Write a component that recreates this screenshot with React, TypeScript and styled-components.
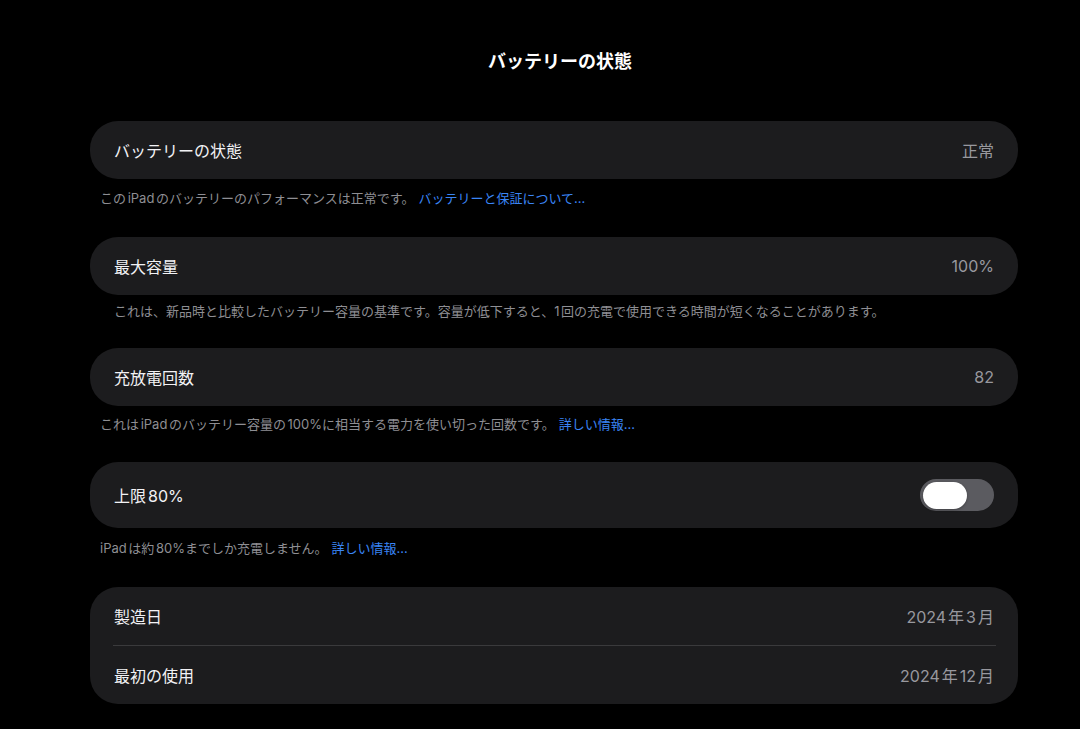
import React from 'react';
import styled, { createGlobalStyle } from 'styled-components';

const GlobalStyle = createGlobalStyle`
  html, body {
    margin: 0;
    padding: 0;
    background: #000;
  }
  body {
    font-family: "Inter", "Noto Sans CJK JP", sans-serif;
    color: #f2f2f7;
    -webkit-font-smoothing: antialiased;
    text-autospace: normal;
  }
`;

const Page = styled.div`
  width: 928px;
  min-height: 729px;
  margin-left: 90px;
  box-sizing: border-box;
  padding-top: 50px;
`;

const Title = styled.h1`
  margin: 0 0 47px;
  padding-left: 12px;
  text-align: center;
  font-size: 18px;
  line-height: 24px;
  font-weight: 700;
  color: #fff;
`;

const Section = styled.section<{ $gap?: number }>`
  margin-bottom: ${p => p.$gap ?? 28}px;
`;

const Card = styled.div`
  background: #1c1c1e;
  border-radius: 28px;
  overflow: hidden;
`;

const Row = styled.div<{ $tall?: boolean }>`
  display: flex;
  align-items: center;
  justify-content: space-between;
  height: ${p => (p.$tall ? '66px' : '58px')};
  padding: 0 24px;
  position: relative;
  font-size: 16px;

  & + & {
    height: 59px;
  }
  & + &::before {
    content: '';
    position: absolute;
    top: 0;
    left: 23px;
    right: 22px;
    height: 1px;
    background: #3a3a3c;
  }
`;

const Label = styled.span`
  color: #f2f2f5;
  font-weight: 400;
`;

const Value = styled.span`
  color: #98989e;
`;

const Footnote = styled.p<{ $indent?: boolean; $top?: number }>`
  margin: ${p => p.$top ?? 10}px 0 0;
  padding-left: ${p => (p.$indent ? '24px' : '10px')};
  font-size: 13px;
  line-height: 18px;
  color: #8e8e93;
`;

const LinkText = styled.a`
  color: #3a85f5;
  text-decoration: none;
  margin-left: 4px;
`;

const Toggle = styled.div<{ $on?: boolean }>`
  width: 74px;
  height: 32px;
  border-radius: 16px;
  background: ${p => (p.$on ? '#34c759' : '#5b5b60')};
  display: flex;
  align-items: center;
  padding: 0 3px;
  box-sizing: border-box;
  justify-content: ${p => (p.$on ? 'flex-end' : 'flex-start')};
`;

const Knob = styled.div`
  width: 44px;
  height: 27px;
  border-radius: 14px;
  background: #fff;
  box-shadow: 0 1px 3px rgba(0, 0, 0, 0.3);
`;

export default function App() {
  return (
    <>
      <GlobalStyle />
      <Page>
        <Title>バッテリーの状態</Title>

        <Section $gap={30}>
          <Card>
            <Row>
              <Label>バッテリーの状態</Label>
              <Value>正常</Value>
            </Row>
          </Card>
          <Footnote>
            このiPadのバッテリーのパフォーマンスは正常です。
            <LinkText>バッテリーと保証について...</LinkText>
          </Footnote>
        </Section>

        <Section $gap={28}>
          <Card>
            <Row>
              <Label>最大容量</Label>
              <Value>100%</Value>
            </Row>
          </Card>
          <Footnote $indent $top={7}>
            これは、新品時と比較したバッテリー容量の基準です。容量が低下すると、1回の充電で使用できる時間が短くなることがあります。
          </Footnote>
        </Section>

        <Section $gap={29}>
          <Card>
            <Row>
              <Label>充放電回数</Label>
              <Value>82</Value>
            </Row>
          </Card>
          <Footnote $top={9}>
            これはiPadのバッテリー容量の100%に相当する電力を使い切った回数です。
            <LinkText>詳しい情報...</LinkText>
          </Footnote>
        </Section>

        <Section $gap={30}>
          <Card>
            <Row $tall>
              <Label>上限80%</Label>
              <Toggle>
                <Knob />
              </Toggle>
            </Row>
          </Card>
          <Footnote $top={11}>
            iPadは約80%までしか充電しません。
            <LinkText>詳しい情報...</LinkText>
          </Footnote>
        </Section>

        <Section>
          <Card>
            <Row>
              <Label>製造日</Label>
              <Value>2024年3月</Value>
            </Row>
            <Row>
              <Label>最初の使用</Label>
              <Value>2024年12月</Value>
            </Row>
          </Card>
        </Section>
      </Page>
    </>
  );
}
